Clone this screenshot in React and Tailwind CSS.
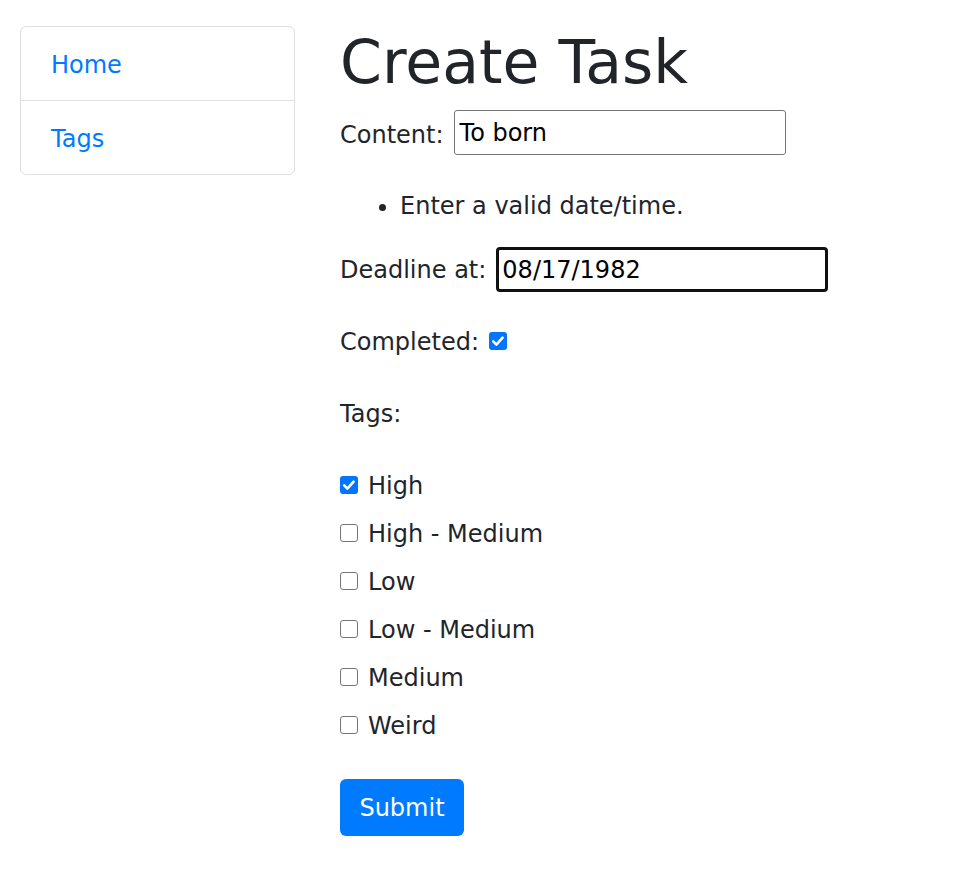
import React from "react";

function Box({ checked }) {
  if (checked) {
    return (
      <span className="mt-[8px] flex h-[18px] w-[18px] shrink-0 items-center justify-center rounded-[3px] bg-[#0075ff]">
        <svg width="18" height="18" viewBox="0 0 18 18">
          <polyline points="4.2,9.4 7.4,12.6 13.6,5.6" fill="none" stroke="#ffffff" strokeWidth="2.6" strokeLinecap="round" strokeLinejoin="round" />
        </svg>
      </span>
    );
  }
  return <span className="mt-[8px] block h-[18px] w-[18px] shrink-0 rounded-[3px] border-[1.5px] border-[#767676] bg-white" />;
}

export default function App() {
  const tags = [
    ["High", true],
    ["High - Medium", false],
    ["Low", false],
    ["Low - Medium", false],
    ["Medium", false],
    ["Weird", false],
  ];
  return (
    <div className="min-h-[885px] bg-white text-[24px] leading-[36px] text-[#212529]" style={{ fontFamily: '"DejaVu Sans", sans-serif' }}>
      <div className="flex items-start pl-[20px] pt-[26px]">
        <div className="w-[275px] shrink-0 rounded-[6px] border border-[#dfdfdf]">
          <div className="border-b border-[#dfdfdf] px-[30px] pb-[17px] pt-[20px] text-[#007bff]">Home</div>
          <div className="px-[30px] pb-[17px] pt-[20px] text-[#007bff]">Tags</div>
        </div>
        <div className="ml-[45px] flex flex-col">
          <h1 className="mb-[12px] h-[72px] text-[60px] font-normal leading-[72px]">Create Task</h1>

          <div className="flex h-[45px] items-start">
            <span className="mt-[7px]">Content:</span>
            <div className="ml-[10px] flex h-[45px] w-[332px] items-center rounded-[3px] border border-[#767676] px-[5px] text-black">
              To born
            </div>
          </div>

          <ul className="mt-[33px] list-disc pl-[60px]">
            <li>Enter a valid date/time.</li>
          </ul>

          <div className="mt-[23px] flex h-[45px] items-start">
            <span className="mt-[5px]">Deadline at:</span>
            <div className="ml-[10px] flex h-[45px] w-[332px] items-center rounded-[4px] border-[3px] border-[#111111] px-[3px] text-black">
              08/17/1982
            </div>
          </div>

          <div className="mt-[32px] flex h-[36px] items-start">
            <span>Completed:</span>
            <span className="ml-[10px] flex">
              <Box checked />
            </span>
          </div>

          <div className="mt-[36px] h-[36px]">Tags:</div>

          <div className="mt-[36px] flex flex-col gap-[12px]">
            {tags.map(([name, c]) => (
              <div key={name} className="flex h-[36px] items-start gap-[10px]">
                <Box checked={c} />
                <span>{name}</span>
              </div>
            ))}
          </div>

          <div className="mt-[35px]">
            <button className="flex h-[57px] w-[124px] items-center justify-center rounded-[6px] bg-[#007bff] text-white">Submit</button>
          </div>
        </div>
      </div>
    </div>
  );
}
